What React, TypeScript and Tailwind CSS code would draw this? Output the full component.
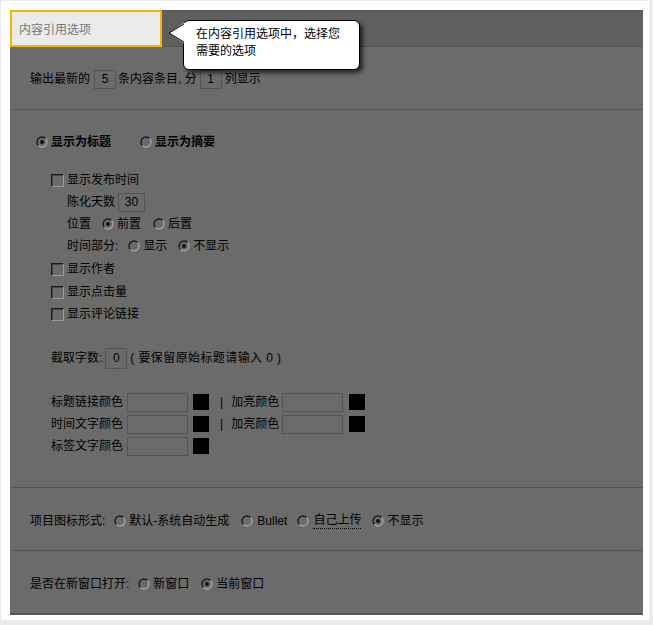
import React from "react";

const font = { fontFamily: '"Liberation Sans", "Noto Sans CJK SC", sans-serif' };

function Radio({ checked = false, className = "" }: { checked?: boolean; className?: string }) {
  return (
    <svg width="12" height="12" viewBox="0 0 12 12" className={"shrink-0 " + className}>
      <path d="M2.46 9.54 A5 5 0 0 1 9.54 2.46" fill="none" stroke="#1a1a1a" strokeWidth="1.4" />
      <path d="M9.54 2.46 A5 5 0 0 1 2.46 9.54" fill="none" stroke="#a3a3a3" strokeWidth="1.4" />
      {checked && <circle cx="6" cy="6" r="2" fill="#111" />}
    </svg>
  );
}

function Checkbox({ className = "" }: { className?: string }) {
  return (
    <span
      className={
        "inline-block w-[13px] h-[13px] shrink-0 border border-t-[#1c1c1c] border-l-[#1c1c1c] border-r-[#9a9a9a] border-b-[#9a9a9a] shadow-[inset_1px_1px_0_#444] " +
        className
      }
    />
  );
}

function Box({ value, className = "" }: { value?: string; className?: string }) {
  return (
    <span
      className={
        "inline-flex items-center justify-center h-[19px] border border-[#555] text-black " +
        className
      }
    >
      {value}
    </span>
  );
}

function Swatch({ className = "" }: { className?: string }) {
  return <span className={"inline-block w-[16px] h-[16px] bg-black shrink-0 " + className} />;
}

function ColorRow({ label, second }: { label: string; second?: boolean }) {
  return (
    <div className="flex items-center h-[22px]">
      <span className="w-[76px]">{label}</span>
      <Box className="w-[61px] h-[18px]" />
      <Swatch className="ml-[5px]" />
      {second && (
        <>
          <span className="ml-[11px]">|</span>
          <span className="ml-[8px] w-[51px]">加亮颜色</span>
          <Box className="w-[61px] h-[18px]" />
          <Swatch className="ml-[6px]" />
        </>
      )}
    </div>
  );
}

export default function App() {
  return (
    <div className="w-[653px] h-[625px] bg-[#ebebeb] pt-px pl-px text-[12px] leading-[16px] text-black" style={font}>
      <div className="w-[648px] h-[619px] bg-white pt-[9px] pl-[9px]">
        <div className="relative w-[633px] h-[605px] bg-[#6b6b6b] flex flex-col border-b-2 border-[#555]">
          {/* header with tab */}
          <div className="flex h-[37px] shrink-0">
            <div className="w-[152px] h-[37px] border-2 border-[#f5b700] bg-[#ebebeb] flex items-center pl-[7px] pt-[2px] text-[#777]">
              内容引用选项
            </div>
            <div className="flex-1 h-[37px] bg-[#5f5f5f] border-t border-b border-[#555]" />
          </div>

          {/* tooltip bubble */}
          <div className="absolute left-[173px] top-[10px] w-[177px] h-[50px] bg-white border border-black rounded-[6px] shadow-[3px_3px_4px_rgba(0,0,0,0.65)] pl-[12px] pt-[5px] leading-[17px] z-10">
            在内容引用选项中，选择您
            <br />
            需要的选项
          </div>
          <svg width="17" height="22" viewBox="0 0 17 22" className="absolute left-[158px] top-[12px] z-20">
            <polygon points="16,1 1,11 16,21 17,21 17,1" fill="#fff" />
            <path d="M16 2 L1 11 L16 20" fill="none" stroke="#000" strokeWidth="1" />
          </svg>

          {/* output count */}
          <div className="h-[63px] shrink-0 border-b border-[#555] flex items-center pl-[20px] pt-[2px]">
            <span>输出最新的</span>
            <Box value="5" className="w-[22px] ml-[4px]" />
            <span className="ml-[2px]">条内容条目, 分</span>
            <Box value="1" className="w-[22px] ml-[3px]" />
            <span className="ml-[3px]">列显示</span>
          </div>

          {/* display options */}
          <div className="h-[378px] shrink-0 border-b border-[#555] pt-[21px]">
            <div className="flex items-center h-[22px] pl-[26px] font-bold">
              <Radio checked />
              <span className="ml-[3px]">显示为标题</span>
              <Radio className="ml-[29px]" />
              <span className="ml-[3px]">显示为摘要</span>
            </div>

            <div className="mt-[16px] pl-[41px]">
              <div className="flex items-center h-[22px]">
                <Checkbox />
                <span className="ml-[3px]">显示发布时间</span>
              </div>
              <div className="flex items-center h-[22px] pl-[16px]">
                <span>陈化天数</span>
                <Box value="30" className="w-[27px] ml-[3px]" />
              </div>
              <div className="flex items-center h-[22px] pl-[16px]">
                <span>位置</span>
                <Radio checked className="ml-[11px]" />
                <span className="ml-[3px]">前置</span>
                <Radio className="ml-[12px]" />
                <span className="ml-[3px]">后置</span>
              </div>
              <div className="flex items-center h-[22px] pl-[16px]">
                <span>时间部分:</span>
                <Radio className="ml-[10px]" />
                <span className="ml-[3px]">显示</span>
                <Radio checked className="ml-[11px]" />
                <span className="ml-[3px]">不显示</span>
              </div>
              <div className="flex items-center h-[22px] mt-px">
                <Checkbox />
                <span className="ml-[3px]">显示作者</span>
              </div>
              <div className="flex items-center h-[22px] mt-px">
                <Checkbox />
                <span className="ml-[3px]">显示点击量</span>
              </div>
              <div className="flex items-center h-[22px]">
                <Checkbox />
                <span className="ml-[3px]">显示评论链接</span>
              </div>

              <div className="flex items-center h-[22px] mt-[22px]">
                <span>截取字数:</span>
                <Box value="0" className="w-[22px] h-[21px] ml-[3px]" />
                <span className="ml-[3px] tracking-[0.4px]">( 要保留原始标题请输入 0 )</span>
              </div>

              <div className="mt-[22px]">
                <ColorRow label="标题链接颜色" second />
                <ColorRow label="时间文字颜色" second />
                <ColorRow label="标签文字颜色" />
              </div>
            </div>
          </div>

          {/* item icon */}
          <div className="h-[63px] shrink-0 border-b border-[#555] flex items-center pl-[20px] pt-[3px]">
            <span>项目图标形式:</span>
            <Radio className="ml-[9px]" />
            <span className="ml-[3px]">默认-系统自动生成</span>
            <Radio className="ml-[12px]" />
            <span className="ml-[4px]">Bullet</span>
            <Radio className="ml-[10px]" />
            <span className="ml-[4px] border-b border-dotted border-black leading-[15px]">自己上传</span>
            <Radio checked className="ml-[11px]" />
            <span className="ml-[3px]">不显示</span>
          </div>

          {/* open in new window */}
          <div className="flex-1 flex items-center pl-[20px] pt-[3px]">
            <span>是否在新窗口打开:</span>
            <Radio className="ml-[9px]" />
            <span className="ml-[3px]">新窗口</span>
            <Radio checked className="ml-[12px]" />
            <span className="ml-[3px]">当前窗口</span>
          </div>
        </div>
      </div>
    </div>
  );
}
